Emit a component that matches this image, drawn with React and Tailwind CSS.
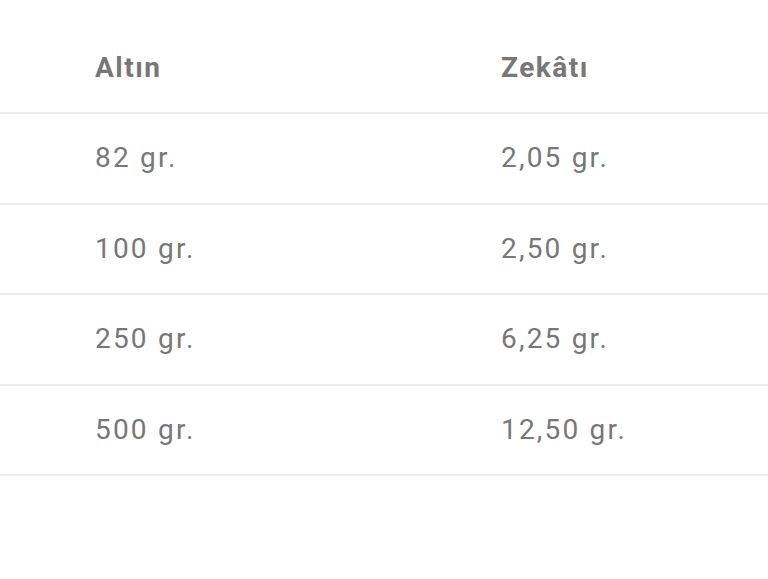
import React from "react";

const rows = [
  ["82 gr.", "2,05 gr."],
  ["100 gr.", "2,50 gr."],
  ["250 gr.", "6,25 gr."],
  ["500 gr.", "12,50 gr."],
];

const App = () => {
  return (
    <div
      className="w-[768px] h-[579px] bg-white pt-[24px]"
      style={{ fontFamily: "Roboto, 'Liberation Sans', sans-serif" }}
    >
      <div className="grid grid-cols-[406px_1fr] h-[90px] items-center border-b-2 border-[#ececec]">
        <div className="pl-[95px] text-[28px] font-bold text-[#777777] tracking-[1.5px]">Altın</div>
        <div className="pl-[95px] text-[28px] font-bold text-[#777777] tracking-[1.5px]">Zekâtı</div>
      </div>
      {rows.map((r) => (
        <div
          key={r[0]}
          className="grid grid-cols-[406px_1fr] h-[90.5px] items-center border-b-2 border-[#ececec]"
        >
          <div className="pl-[95px] text-[28px] text-[#777777] tracking-[2.2px]">{r[0]}</div>
          <div className="pl-[95px] text-[28px] text-[#777777] tracking-[2.2px]">{r[1]}</div>
        </div>
      ))}
    </div>
  );
};

export default App;
